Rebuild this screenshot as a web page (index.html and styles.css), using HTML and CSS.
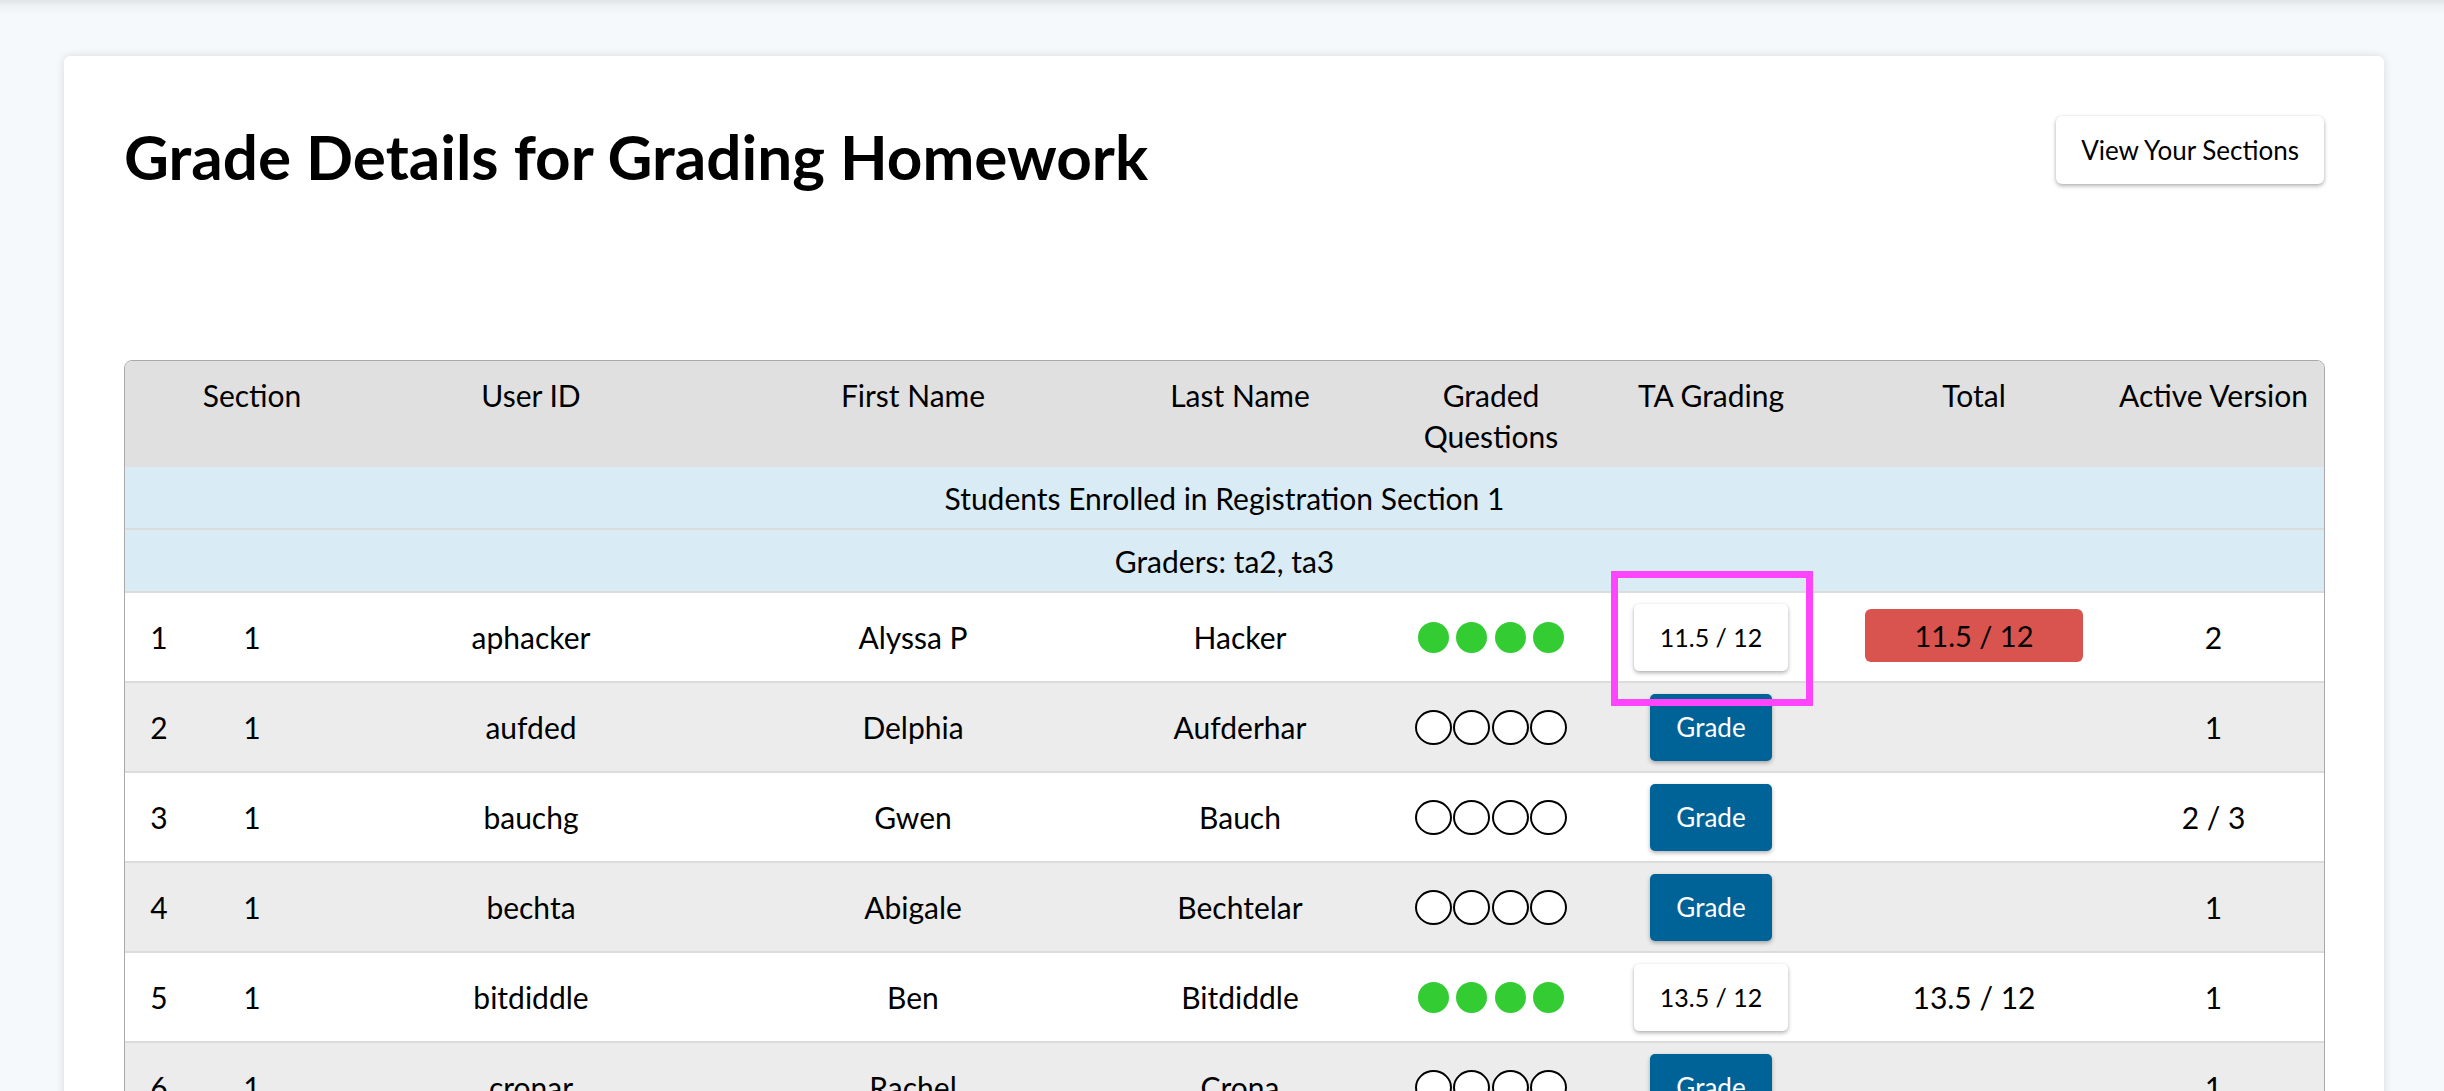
FILE: index.html
```html
<!DOCTYPE html>
<html lang="en">
<head>
<meta charset="utf-8">
<title>Grade Details for Grading Homework</title>
<link rel="stylesheet" href="styles.css">
</head>
<body>
<div class="page">
  <main class="card">
    <div class="page-head">
      <h1 class="title">Grade Details for Grading Homework</h1>
      <button class="btn btn-view" type="button">View Your Sections</button>
    </div>
    <table class="grades">
      <colgroup>
        <col class="c-idx"><col class="c-sec"><col class="c-uid"><col class="c-first"><col class="c-last"><col class="c-q"><col class="c-ta"><col class="c-total"><col class="c-ver">
      </colgroup>
      <thead>
        <tr>
          <th></th><th>Section</th><th>User ID</th><th>First Name</th><th>Last Name</th><th>Graded Questions</th><th>TA Grading</th><th>Total</th><th>Active Version</th>
        </tr>
      </thead>
      <tbody>
        <tr class="info"><td colspan="9">Students Enrolled in Registration Section 1</td></tr>
        <tr class="info"><td colspan="9">Graders: ta2, ta3</td></tr>
        <tr class="row">
          <td>1</td><td>1</td><td>aphacker</td><td>Alyssa P</td><td>Hacker</td>
          <td><span class="qs"><span class="q done"></span><span class="q done"></span><span class="q done"></span><span class="q done"></span></span></td>
          <td class="ta"><button class="btn btn-score" type="button">11.5 / 12</button><span class="focus-ring"></span></td>
          <td><span class="badge-over">11.5 / 12</span></td>
          <td>2</td>
        </tr>
        <tr class="row alt">
          <td>2</td><td>1</td><td>aufded</td><td>Delphia</td><td>Aufderhar</td>
          <td><span class="qs"><span class="q todo"></span><span class="q todo"></span><span class="q todo"></span><span class="q todo"></span></span></td>
          <td class="ta"><button class="btn btn-grade" type="button">Grade</button></td>
          <td></td>
          <td>1</td>
        </tr>
        <tr class="row">
          <td>3</td><td>1</td><td>bauchg</td><td>Gwen</td><td>Bauch</td>
          <td><span class="qs"><span class="q todo"></span><span class="q todo"></span><span class="q todo"></span><span class="q todo"></span></span></td>
          <td class="ta"><button class="btn btn-grade" type="button">Grade</button></td>
          <td></td>
          <td>2 / 3</td>
        </tr>
        <tr class="row alt">
          <td>4</td><td>1</td><td>bechta</td><td>Abigale</td><td>Bechtelar</td>
          <td><span class="qs"><span class="q todo"></span><span class="q todo"></span><span class="q todo"></span><span class="q todo"></span></span></td>
          <td class="ta"><button class="btn btn-grade" type="button">Grade</button></td>
          <td></td>
          <td>1</td>
        </tr>
        <tr class="row">
          <td>5</td><td>1</td><td>bitdiddle</td><td>Ben</td><td>Bitdiddle</td>
          <td><span class="qs"><span class="q done"></span><span class="q done"></span><span class="q done"></span><span class="q done"></span></span></td>
          <td class="ta"><button class="btn btn-score" type="button">13.5 / 12</button></td>
          <td>13.5 / 12</td>
          <td>1</td>
        </tr>
        <tr class="row alt">
          <td>6</td><td>1</td><td>cronar</td><td>Rachel</td><td>Crona</td>
          <td><span class="qs"><span class="q todo"></span><span class="q todo"></span><span class="q todo"></span><span class="q todo"></span></span></td>
          <td class="ta"><button class="btn btn-grade" type="button">Grade</button></td>
          <td></td>
          <td>1</td>
        </tr>
      </tbody>
    </table>
  </main>
</div>
</body>
</html>
```
FILE: styles.css
```css
html, body {
  margin: 0;
  padding: 0;
}
body {
  font-family: "Lato", "Liberation Sans", sans-serif;
  color: #000;
  background: #f5f9fc linear-gradient(to bottom, #dfe3e7 0px, #eef2f5 6px, #f5f9fc 14px) no-repeat top left / 100% 14px;
}
.page {
  padding: 56px 60px 0 64px;
}
.card {
  background: #fff;
  border-radius: 6px;
  box-shadow: 0 0 10px rgba(0, 0, 0, 0.12);
  padding: 60px 60px 80px 60px;
}
.page-head {
  display: flex;
  justify-content: space-between;
  align-items: flex-start;
  height: 78px;
}
.title {
  margin: 3px 0 0 0;
  font-size: 62px;
  line-height: 74px;
  font-weight: 700;
}
.btn {
  font-family: inherit;
  border: 0;
  cursor: pointer;
  display: inline-flex;
  align-items: center;
  justify-content: center;
  border-radius: 6px;
  vertical-align: middle;
}
.btn-view {
  height: 68px;
  padding: 0 25px;
  font-size: 26px;
  background: #fff;
  color: #000;
  box-shadow: 0 2px 4px rgba(0, 0, 0, 0.3), 0 0 2px rgba(0, 0, 0, 0.08);
}
.grades {
  margin-top: 166px;
  width: 100%;
  table-layout: fixed;
  border-collapse: separate;
  border-spacing: 0;
  border: 1px solid #a9a9a9;
  border-radius: 8px;
  font-size: 30px;
}
.c-idx { width: 68px; }
.c-sec { width: 118px; }
.c-uid { width: 440px; }
.c-first { width: 324px; }
.c-last { width: 330px; }
.c-q { width: 172px; }
.c-ta { width: 268px; }
.c-total { width: 258px; }
.c-ver { width: 221px; }

.grades th {
  background: #e0e0e0;
  font-weight: 400;
  line-height: 41px;
  vertical-align: top;
  padding: 14px 4px 10px;
  text-align: center;
}
.grades th:first-child { border-top-left-radius: 7px; }
.grades th:last-child { border-top-right-radius: 7px; }

.grades td {
  text-align: center;
  vertical-align: middle;
  padding: 0;
  border-top: 2px solid #dcdcdc;
}
.grades tbody tr:first-child td { border-top: 0; }
.info td {
  background: #d9ebf5;
  height: 61px;
}
.row td {
  height: 88px;
  background: #fff;
}
.row.alt td {
  background: #ececec;
}
.qs {
  display: inline-flex;
  vertical-align: middle;
  margin-top: -6px;
}
.q {
  width: 38.5px;
  height: 36px;
  display: inline-flex;
  align-items: center;
  justify-content: center;
}
.q::before {
  content: "";
  display: block;
  border-radius: 50%;
  box-sizing: border-box;
}
.q.done::before {
  width: 31px;
  height: 31px;
  background: #33cc33;
}
.q.todo::before {
  width: 37px;
  height: 35px;
  border: 2.5px solid #000;
  background: #fff;
}
.ta {
  position: relative;
}
.btn-score {
  height: 67px;
  padding: 0 26px;
  min-width: 150px;
  font-size: 25px;
  background: #fff;
  color: #000;
  border-radius: 5px;
  box-shadow: 0 2px 4px rgba(0, 0, 0, 0.3), 0 0 2px rgba(0, 0, 0, 0.06);
}
.btn-grade {
  height: 67px;
  width: 122px;
  font-size: 26px;
  background: #006398;
  color: #fff;
  border-radius: 5px;
  box-shadow: 0 2px 4px rgba(0, 0, 0, 0.3);
}
.badge-over {
  display: inline-block;
  width: 218px;
  height: 53px;
  line-height: 53px;
  background: #d9534f;
  border-radius: 6px;
  font-size: 29px;
  vertical-align: middle;
  margin-top: -3px;
}
.focus-ring {
  position: absolute;
  z-index: 5;
  left: 50%;
  top: -22px;
  width: 202px;
  height: 135px;
  margin-left: -100px;
  box-sizing: border-box;
  border: 7px solid #fd45fd;
  pointer-events: none;
}
```
